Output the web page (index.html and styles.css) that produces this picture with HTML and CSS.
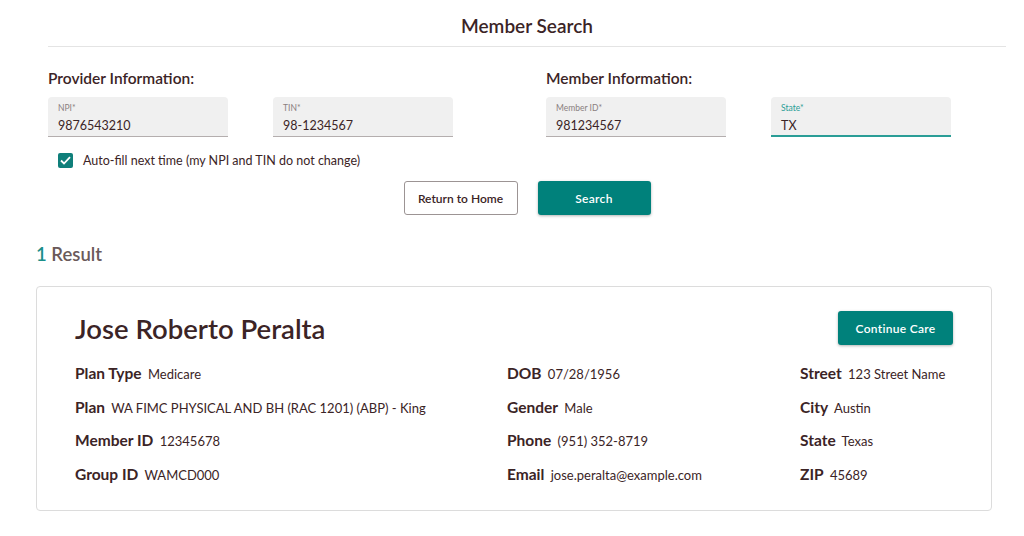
FILE: index.html
```html
<!DOCTYPE html>
<html lang="en">
<head>
  <meta charset="UTF-8" />
  <title>Member Search</title>
  <link rel="stylesheet" href="styles.css">
</head>
<body>
  <div class="search">
    <h1>Member Search</h1>

    <div class="sections">
      <div class="section">
        <h2>Provider Information:</h2>
        <div class="fields">
          <div class="field">
            <label>NPI*</label>
            <div class="value">9876543210</div>
          </div>
          <div class="field">
            <label>TIN*</label>
            <div class="value">98-1234567</div>
          </div>
        </div>
        <div class="check">
          <span class="box">
            <svg width="11" height="9" viewBox="0 0 11 9"><path d="M1 4.5 L4 7.5 L10 1.2" fill="none" stroke="#fff" stroke-width="1.8"/></svg>
          </span>
          Auto-fill next time (my NPI and TIN do not change)
        </div>
      </div>
      <div class="section">
        <h2>Member Information:</h2>
        <div class="fields">
          <div class="field">
            <label>Member ID*</label>
            <div class="value">981234567</div>
          </div>
          <div class="field active">
            <label>State*</label>
            <div class="value">TX</div>
          </div>
        </div>
      </div>
    </div>

    <div class="actions">
      <button class="btn outline">Return to Home</button>
      <button class="btn primary wide">Search</button>
    </div>
  </div>

  <div class="results">
    <div class="count"><span class="num">1</span> Result</div>

    <div class="card">
      <div class="card-head">
        <div class="name">Jose Roberto Peralta</div>
        <button class="btn primary">Continue Care</button>
      </div>
      <div class="details">
        <div class="row"><b>Plan Type</b> Medicare</div>
        <div class="row"><b>DOB</b> 07/28/1956</div>
        <div class="row"><b>Street</b> 123 Street Name</div>
        <div class="row"><b>Plan</b> WA FIMC PHYSICAL AND BH (RAC 1201) (ABP) - King</div>
        <div class="row"><b>Gender</b> Male</div>
        <div class="row"><b>City</b> Austin</div>
        <div class="row"><b>Member ID</b> 12345678</div>
        <div class="row"><b>Phone</b> (951) 352-8719</div>
        <div class="row"><b>State</b> Texas</div>
        <div class="row"><b>Group ID</b> WAMCD000</div>
        <div class="row"><b>Email</b> jose.peralta@example.com</div>
        <div class="row"><b>ZIP</b> 45689</div>
      </div>
    </div>
  </div>
</body>
</html>
```

FILE: styles.css
```css
body {
  font-family: Lato, "Liberation Sans", sans-serif;
  color: #3b2426;
  background: #fff;
  margin: 0;
}
.search {
  margin: 0 18px 0 48px;
}
h1 {
  font-size: 19px;
  font-weight: 600;
  text-align: center;
  margin: 0;
  padding: 14px 0 9px;
  border-bottom: 1px solid #e4e4e4;
}
.sections {
  display: flex;
  gap: 93px;
  margin-top: 22px;
}
h2 {
  font-size: 15.5px;
  font-weight: 600;
  margin: 0 0 10px;
}
.fields {
  display: flex;
  gap: 45px;
}
.field {
  width: 180px;
  height: 40px;
  box-sizing: border-box;
  background: #f0f0f0;
  border-radius: 4px 4px 0 0;
  border-bottom: 1px solid #b4aeae;
  padding: 6px 10px 0;
}
.field label {
  display: block;
  font-size: 8.5px;
  color: #8a8080;
  line-height: 11px;
}
.field .value {
  font-size: 12.5px;
  line-height: 20px;
  margin-top: 2px;
}
.field.active {
  border-bottom: 2px solid #2a9d96;
}
.field.active label {
  color: #2a9d96;
}
.check {
  display: flex;
  align-items: center;
  gap: 10px;
  font-size: 12.5px;
  margin: 16px 0 0 10px;
}
.box {
  width: 15px;
  height: 15px;
  background: #0f7f7a;
  border-radius: 2px;
  display: flex;
  align-items: center;
  justify-content: center;
}
.actions {
  display: flex;
  justify-content: center;
  gap: 20px;
  margin-top: 13px;
}
.btn {
  font-family: inherit;
  font-size: 12px;
  font-weight: 600;
  height: 34px;
  border-radius: 3px;
  padding: 0 12px;
  cursor: pointer;
}
.outline {
  background: #fff;
  color: #3b2426;
  border: 1px solid #9c9494;
  width: 114px;
}
.primary {
  background: #00817b;
  color: #fff;
  border: none;
  box-shadow: 0 1px 3px rgba(0,0,0,0.3);
  letter-spacing: 0.3px;
}
.wide {
  width: 113px;
}
.results {
  margin: 0 32px 0 36px;
}
.count {
  font-size: 18.5px;
  font-weight: 600;
  color: #6a5a5a;
  margin: 28px 0 21px;
}
.count .num {
  color: #1b8f89;
}
.card {
  border: 1px solid #dcdcdc;
  border-radius: 4px;
  padding: 24px 38px 25px;
}
.card-head {
  display: flex;
  justify-content: space-between;
  align-items: center;
}
.name {
  font-size: 27.5px;
  font-weight: 600;
}
.card-head .btn {
  width: 115px;
}
.details {
  display: grid;
  grid-template-columns: 432px 293px 1fr;
  row-gap: 12.5px;
  margin-top: 18px;
}
.row {
  font-size: 13px;
  line-height: 20px;
}
.row b {
  font-size: 15.5px;
  font-weight: 700;
  margin-right: 3px;
}
```
